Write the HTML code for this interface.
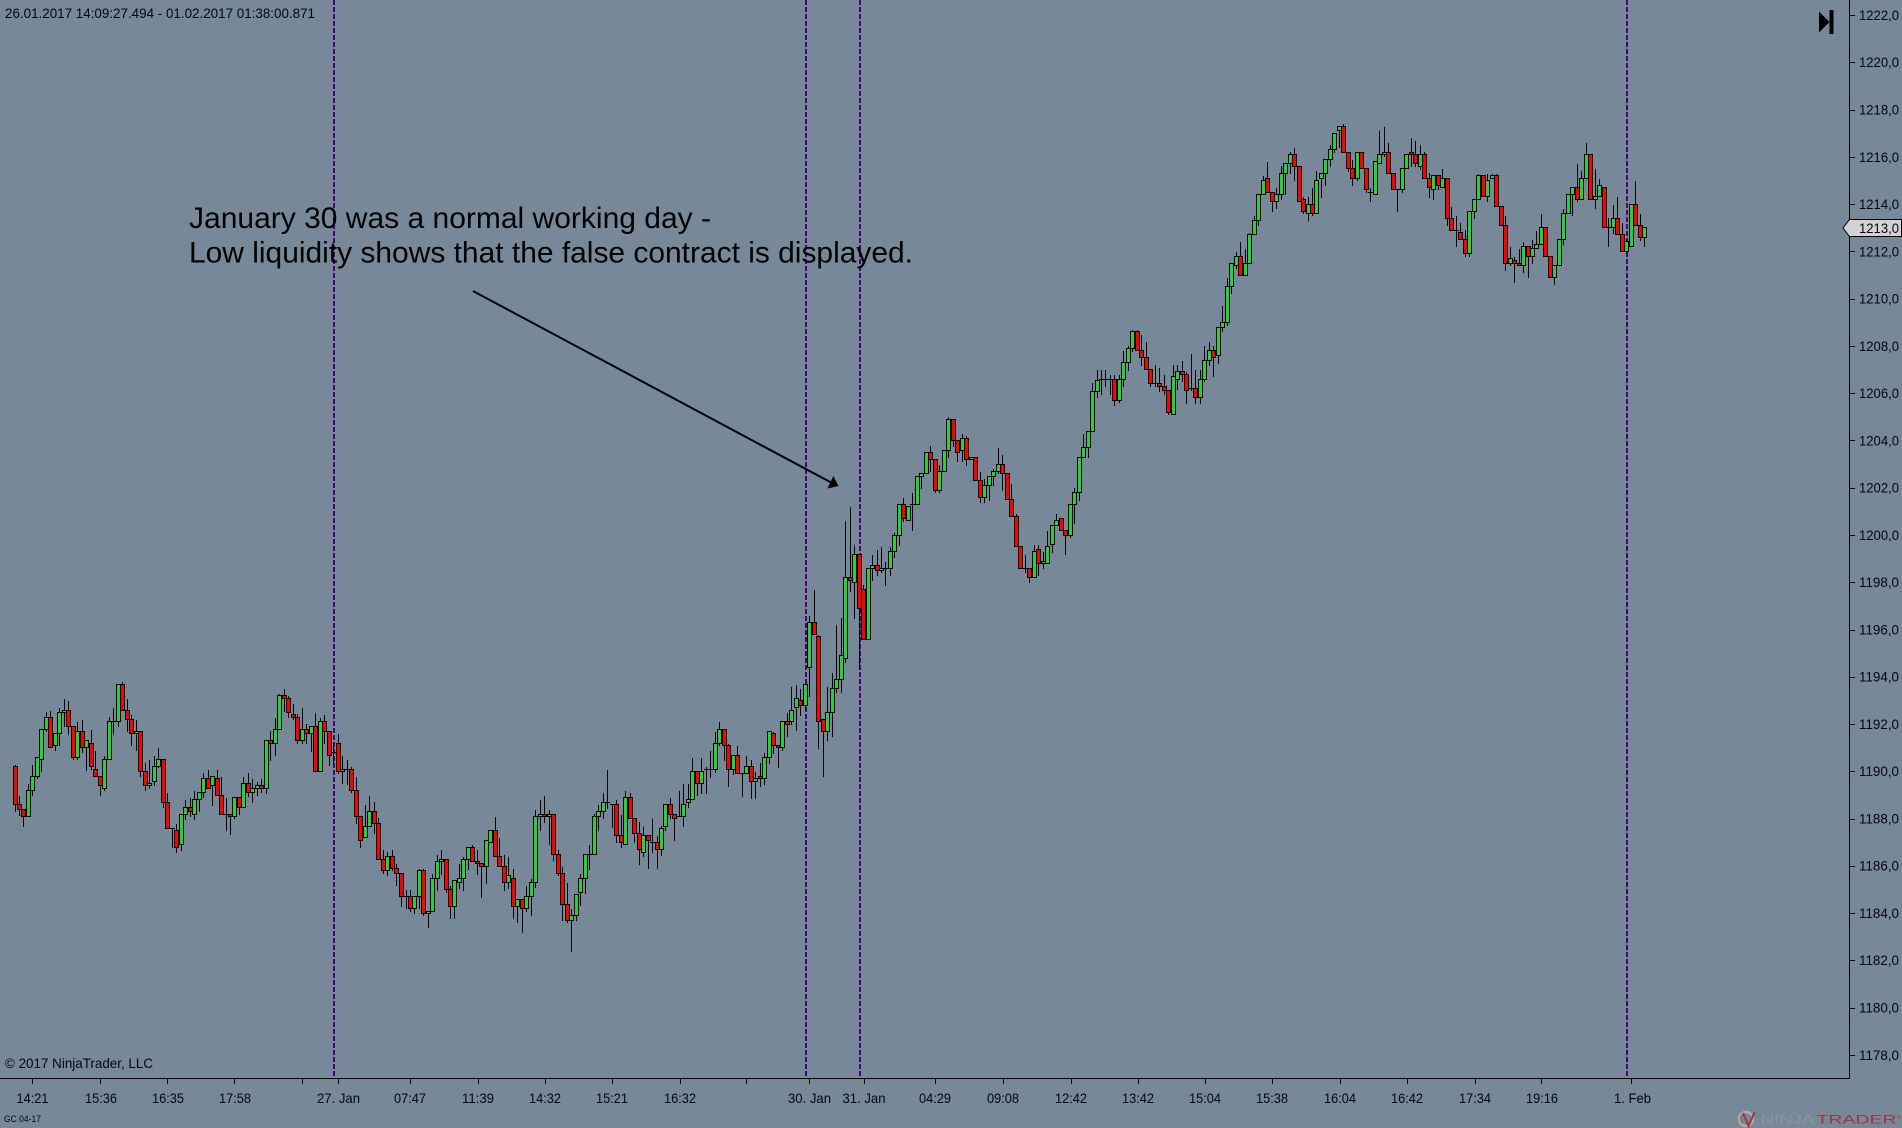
<!DOCTYPE html>
<html>
<head>
<meta charset="utf-8">
<title>Chart</title>
<style>
html,body{margin:0;padding:0;background:#778899;width:1902px;height:1128px;overflow:hidden}
svg{display:block;position:absolute;left:0;top:0}
text{font-family:"Liberation Sans",Arial,sans-serif;fill:#05050f}
</style>
</head>
<body>
<svg id="c" width="1902" height="1128" viewBox="0 0 1902 1128" xmlns="http://www.w3.org/2000/svg">
<rect width="1902" height="1128" fill="#778899"/>
<g stroke="#4b0082" stroke-width="2" stroke-dasharray="5 2" fill="none">
<path d="M334 0V1077"/><path d="M806 0V1077"/><path d="M860 0V1077"/><path d="M1627 0V1077"/>
</g>
<g id="candles"></g>
<path d="M0 1078.5H1849.5V0" fill="none" stroke="#000" stroke-width="1"/>
<path id="ticks" fill="none" stroke="#000" stroke-width="1" d=""/>

<text x="5" y="18" font-size="14" textLength="310" lengthAdjust="spacingAndGlyphs">26.01.2017 14:09:27.494 - 01.02.2017 01:38:00.871</text>
<text x="5" y="1068" font-size="14" textLength="148" lengthAdjust="spacingAndGlyphs">© 2017 NinjaTrader, LLC</text>
<text x="4" y="1122" font-size="9" textLength="37" lengthAdjust="spacingAndGlyphs">GC 04-17</text>

<text x="189" y="228" font-size="30" style="fill:#000" textLength="522" lengthAdjust="spacingAndGlyphs">January 30 was a normal working day -</text>
<text x="189" y="262.500" font-size="30" style="fill:#000" textLength="724" lengthAdjust="spacingAndGlyphs">Low liquidity shows that the false contract is displayed.</text>

<path d="M473 291L832 483" stroke="#000" stroke-width="2" fill="none"/>
<path d="M838.5 486L827.5 488.5L833.3 476Z" fill="#000"/>

<path d="M1819 11.5L1829.5 22L1819 32.5Z M1829.5 10H1833.5V34H1829.5Z" fill="#000"/>

<g font-size="14">
<text x="1859" y="20" textLength="40" lengthAdjust="spacingAndGlyphs">1222,0</text>
<text x="1859" y="67" textLength="40" lengthAdjust="spacingAndGlyphs">1220,0</text>
<text x="1859" y="114.500" textLength="40" lengthAdjust="spacingAndGlyphs">1218,0</text>
<text x="1859" y="162" textLength="40" lengthAdjust="spacingAndGlyphs">1216,0</text>
<text x="1859" y="209" textLength="40" lengthAdjust="spacingAndGlyphs">1214,0</text>
<text x="1859" y="256.500" textLength="40" lengthAdjust="spacingAndGlyphs">1212,0</text>
<text x="1859" y="303.500" textLength="40" lengthAdjust="spacingAndGlyphs">1210,0</text>
<text x="1859" y="351" textLength="40" lengthAdjust="spacingAndGlyphs">1208,0</text>
<text x="1859" y="398" textLength="40" lengthAdjust="spacingAndGlyphs">1206,0</text>
<text x="1859" y="445.500" textLength="40" lengthAdjust="spacingAndGlyphs">1204,0</text>
<text x="1859" y="492.500" textLength="40" lengthAdjust="spacingAndGlyphs">1202,0</text>
<text x="1859" y="540" textLength="40" lengthAdjust="spacingAndGlyphs">1200,0</text>
<text x="1859" y="587" textLength="40" lengthAdjust="spacingAndGlyphs">1198,0</text>
<text x="1859" y="634.500" textLength="40" lengthAdjust="spacingAndGlyphs">1196,0</text>
<text x="1859" y="681.500" textLength="40" lengthAdjust="spacingAndGlyphs">1194,0</text>
<text x="1859" y="729" textLength="40" lengthAdjust="spacingAndGlyphs">1192,0</text>
<text x="1859" y="776" textLength="40" lengthAdjust="spacingAndGlyphs">1190,0</text>
<text x="1859" y="823.500" textLength="40" lengthAdjust="spacingAndGlyphs">1188,0</text>
<text x="1859" y="870.500" textLength="40" lengthAdjust="spacingAndGlyphs">1186,0</text>
<text x="1859" y="918" textLength="40" lengthAdjust="spacingAndGlyphs">1184,0</text>
<text x="1859" y="965" textLength="40" lengthAdjust="spacingAndGlyphs">1182,0</text>
<text x="1859" y="1012.500" textLength="40" lengthAdjust="spacingAndGlyphs">1180,0</text>
<text x="1859" y="1060" textLength="40" lengthAdjust="spacingAndGlyphs">1178,0</text>
</g>

<path d="M1843 228L1849.5 219.5H1901.5V236.5H1849.500Z" fill="#d3d3d3" stroke="#000" stroke-width="1"/>
<text x="1859" y="233" font-size="14" textLength="40" lengthAdjust="spacingAndGlyphs">1213,0</text>

<g font-size="14">
<text x="16.500" y="1103" textLength="32" lengthAdjust="spacingAndGlyphs">14:21</text>
<text x="85" y="1103" textLength="32" lengthAdjust="spacingAndGlyphs">15:36</text>
<text x="152" y="1103" textLength="32" lengthAdjust="spacingAndGlyphs">16:35</text>
<text x="219" y="1103" textLength="32" lengthAdjust="spacingAndGlyphs">17:58</text>
<text x="317" y="1103" textLength="43" lengthAdjust="spacingAndGlyphs">27. Jan</text>
<text x="394" y="1103" textLength="32" lengthAdjust="spacingAndGlyphs">07:47</text>
<text x="462" y="1103" textLength="32" lengthAdjust="spacingAndGlyphs">11:39</text>
<text x="529" y="1103" textLength="32" lengthAdjust="spacingAndGlyphs">14:32</text>
<text x="596" y="1103" textLength="32" lengthAdjust="spacingAndGlyphs">15:21</text>
<text x="664" y="1103" textLength="32" lengthAdjust="spacingAndGlyphs">16:32</text>
<text x="788" y="1103" textLength="43" lengthAdjust="spacingAndGlyphs">30. Jan</text>
<text x="842.500" y="1103" textLength="43" lengthAdjust="spacingAndGlyphs">31. Jan</text>
<text x="919" y="1103" textLength="32" lengthAdjust="spacingAndGlyphs">04:29</text>
<text x="987" y="1103" textLength="32" lengthAdjust="spacingAndGlyphs">09:08</text>
<text x="1055" y="1103" textLength="32" lengthAdjust="spacingAndGlyphs">12:42</text>
<text x="1122" y="1103" textLength="32" lengthAdjust="spacingAndGlyphs">13:42</text>
<text x="1189" y="1103" textLength="32" lengthAdjust="spacingAndGlyphs">15:04</text>
<text x="1256" y="1103" textLength="32" lengthAdjust="spacingAndGlyphs">15:38</text>
<text x="1324" y="1103" textLength="32" lengthAdjust="spacingAndGlyphs">16:04</text>
<text x="1391" y="1103" textLength="32" lengthAdjust="spacingAndGlyphs">16:42</text>
<text x="1459" y="1103" textLength="32" lengthAdjust="spacingAndGlyphs">17:34</text>
<text x="1526" y="1103" textLength="32" lengthAdjust="spacingAndGlyphs">19:16</text>
<text x="1614" y="1103" textLength="37" lengthAdjust="spacingAndGlyphs">1. Feb</text>
</g>

<g fill="none">
<circle cx="1746" cy="1119" r="7" stroke="#b4aaa4" stroke-width="2.500"/>
<path d="M1743 1114.500A5 5 0 0 0 1743 1123" stroke="#7d6f68" stroke-width="1.500"/>
<path d="M1743 1113L1748.500 1126L1754.500 1112.500" stroke="#a5323e" stroke-width="2"/>
</g>
<text x="1760.500" y="1123.500" font-size="11.500" style="fill:#8d95a0" textLength="54" lengthAdjust="spacingAndGlyphs">NINJA</text>
<text x="1816.500" y="1123.500" font-size="11.500" style="fill:#a5323e" textLength="80" lengthAdjust="spacingAndGlyphs">TRADER</text>
<text x="1897" y="1119" font-size="5" style="fill:#a5323e">®</text>
</svg>
<script>
var S=[
[0,680,"r46,259,373,255,395 r58,373,388,348,405 r70,388,409,388,440 g85,332,409,312,409 g97,290,332,255,347 g112,232,290,232,296 g124,148,238,148,275 g139,112,148,98,155 r151,112,202,93,202 g166,160,196,160,212 g178,97,160,85,197 g193,91,97,57,140 r205,91,139,63,162 r220,139,232,139,238 g232,154,232,127,238 r247,154,202,120,218 g259,181,202,181,270 r274,190,259,151,268 r286,268,290,213,290 r301,290,317,290,347 g313,238,325,228,332 g328,124,238,113,238 d340,124,124,84,162 g355,13,124,13,140 r367,13,91,6,91 r382,91,118,57,155 r394,118,160,106,197 g409,154,160,120,212 r421,154,274,154,290 r436,274,317,250,332 g448,310,317,240,325 g463,259,304,228,315 g475,238,259,205,262 r490,238,367,238,383 r502,367,445,340,445 d517,445,445,445,503 r529,451,502,433,518 g544,403,493,403,510 g556,382,403,360,418 r571,382,394,355,410 g583,358,403,333,418 g598,337,358,337,395 g610,295,337,280,352 r625,295,325,270,325 g637,289,316,289,375 r652,295,346,270,346 r664,346,403,292,403 d679,403,403,354,452 r691,403,409,403,462 g703,352,409,352,416 r718,352,382,352,404 g730,310,382,292,382 r745,310,337,280,350 g757,325,337,297,368 g772,316,325,307,346 r784,316,325,297,338 g799,181,325,181,340 r811,181,190,155,240 g826,148,190,115,227 g838,46,148,43,148 r853,46,55,27,93 r865,55,97,48,112 r880,103,112,72,118 r892,112,181,103,190 g907,148,181,84,190 r919,148,160,134,190 g934,139,160,139,213 r946,139,274,99,274 g961,124,274,115,274 r973,124,154,106,190 r988,154,226,154,255 d1000,217,217,190,250 r1015,190,274,163,280 g1027,268,274,228,311 d1042,268,268,240,312 r1054,268,331,262,338 r1069,331,409,291,430 r1081,409,481,409,503 g1096,439,472,376,472 g1108,394,439,349,439 r1123,394,430,367,460 r1135,430,538,415,538 r1150,538,571,510,580 g1162,529,571,518,586 r1177,529,565,510,571 r1189,565,580,553,616"],
[400,680,"r3,580,649,580,680 d18,649,649,630,686 r31,649,685,630,695 g43,649,685,649,700 g58,571,649,568,685 r70,571,700,568,707 g85,694,700,694,743 g97,595,694,583,694 g112,544,595,526,630 g124,538,544,511,583 r139,538,628,538,638 r151,628,679,618,716 g163,601,679,601,716 g178,595,607,553,625 g190,538,595,532,630 g205,502,538,502,567 r217,502,544,495,544 r232,544,550,511,582 r244,550,559,550,651 g259,481,559,481,609 g271,451,487,451,487 r286,451,529,411,529 r298,529,559,475,559 r313,559,607,526,630 g325,586,607,532,625 r340,595,679,568,716 g352,658,679,658,728 r367,658,685,658,758 g379,649,685,618,695 g394,607,649,598,707 g406,409,607,391,623 g421,403,409,361,452 r433,403,409,349,426 g448,403,409,391,494 r460,403,523,403,540 r475,523,580,511,586 r487,580,673,562,722 r502,673,721,610,728 g514,706,721,687,815 g529,643,706,643,721 g541,595,637,583,675 g556,523,595,523,640 d568,523,523,495,568 g583,409,523,403,523 g595,394,409,376,452 g610,367,394,340,416 d622,367,367,270,384 d637,373,373,373,441 r649,373,466,361,487 r664,466,487,406,502 g676,352,493,334,493 r691,352,415,340,415 r703,415,460,415,488 r718,460,508,427,552 g730,466,517,442,529 r745,466,481,466,566 d757,487,487,418,517 r772,487,508,469,566 g784,445,508,439,525 g796,373,439,373,451 r811,373,403,355,415 r823,403,415,403,482 d838,409,409,334,409 g850,373,409,313,440 g865,358,367,313,383 g877,274,358,235,358 r892,274,310,274,347 g904,274,310,235,340 d919,268,268,262,340 d931,268,268,214,291 g946,190,268,157,276 g958,148,190,126,196 r973,148,196,148,240 r985,196,268,193,318 g1000,226,268,226,283 r1012,226,280,199,280 d1027,280,280,280,348 g1039,259,280,229,280 r1054,259,304,241,354 g1066,295,304,277,354 r1081,289,295,250,318 g1093,232,295,220,312 g1108,154,232,154,250 r1120,160,196,157,220 r1135,196,202,196,261 g1147,124,202,124,212 r1162,124,133,100,170 g1174,91,124,22,133 g1189,55,82,16,150"],
[780,400,"r61,901,916,868,945 g76,853,916,853,925 g88,667,802,648,888 r103,667,703,570,703 r115,709,964,706,1045 r130,958,994,958,1130 g142,937,994,862,1022 g157,865,937,820,1010 g169,838,865,675,876 g184,766,838,655,876 g196,532,775,363,788 r211,532,541,322,575 g223,463,547,435,655 r238,463,625,463,808 r250,568,718,555,718 g265,505,718,505,718 g277,496,505,466,542 r292,496,511,450,526 g304,505,511,442,517 d316,505,505,487,555 g331,454,505,442,527 g343,406,454,400,472 g358,313,406,313,435 r370,313,355,295,363 g385,319,361,319,361 d397,313,313,280,392 g412,229,313,229,313 g424,220,229,220,265 g439,157,220,157,220 r451,157,178,138,215 r466,178,271,178,278 g478,214,271,196,278 g493,151,214,151,214 g505,58,151,52,172 r520,58,121,58,138 r532,121,157,121,185 g547,115,151,102,183 r559,115,178,108,196 g574,172,178,172,178 r586,172,241,172,241 r601,241,292,217,308 g613,256,292,238,308 g628,229,256,229,300 g640,214,229,208,256 g655,193,214,145,220 r667,193,220,166,272 r682,220,298,220,298 r694,298,349,252,349 r709,349,439,343,439 r721,439,505,439,505 d736,505,505,466,518 r748,505,532,505,548 g763,454,532,436,532 r775,448,490,436,526 g790,484,490,457,505 g802,439,490,394,490 g817,376,433,376,456 g829,361,376,343,376 r844,355,391,355,391 r856,391,406,391,464 g871,313,406,313,412 g883,277,313,265,370 g898,172,277,172,300 g910,142,172,103,172 g925,94,142,94,173 g937,-27,94,-51,94 g952,-60,-27,-90,-9"],
[1100,220,"d4,478,478,450,522 d16,478,478,450,500 d31,478,478,465,522 r43,478,541,465,557 g58,478,541,465,548 g70,427,478,393,500 g85,385,427,378,450 g97,334,385,330,393 r112,334,391,330,391 r124,391,412,345,435 r139,412,448,366,448 r151,448,490,448,500 d166,490,490,435,500 r178,490,499,445,513 r193,499,511,465,522 r205,511,577,511,584 g220,469,583,435,583 g232,454,478,435,507 r247,454,463,423,485 r259,463,511,457,549 d274,505,505,403,511 r286,505,532,450,549 g301,478,532,450,549 g313,421,478,378,485 g328,391,421,366,435 r340,391,412,378,470 g355,322,406,322,429 g367,307,322,258,335 g382,199,307,175,315 g394,130,199,130,220 g409,109,136,96,144 r421,109,166,66,166 g436,130,166,87,166 g448,43,130,40,130"],
[1245,120,"g28,301,343,290,343 g40,223,301,223,316 g55,181,223,168,223 r67,176,217,127,217 r82,217,244,217,275 g94,223,244,205,265"],
[1280,110,"g4,190,253,170,269 g16,160,190,160,253 g31,133,160,127,190 r43,133,169,114,212 r58,169,274,169,274 r70,268,304,262,310 g85,283,310,262,332 r97,283,310,235,316 g109,211,310,184,310 g124,190,205,190,262 g136,148,190,148,226 g151,118,148,105,170 g163,70,118,70,127 g178,49,61,49,112 r190,49,127,43,127 r205,127,175,127,184 r217,175,205,151,226 g232,127,205,127,212 r244,127,175,127,175 r259,175,238,175,248 d271,247,247,235,275 g286,154,253,154,253 g298,133,160,64,160 g313,127,133,52,140 r325,127,190,100,190 r340,190,238,190,238 d352,238,238,238,305 g367,175,238,175,248 g379,133,175,133,175 r394,127,133,85,170 r406,133,160,94,170 g421,133,169,106,178 r433,133,205,127,205 r448,205,232,190,262 g460,196,238,196,269 r475,196,226,196,238 g487,205,232,178,232 r502,205,325,205,347 r514,325,361,292,361 d529,361,361,319,410 r541,367,388,340,388 r556,388,430,361,440 g568,304,430,304,440 g583,268,304,268,325 g595,196,268,193,268 r610,196,259,196,259 g622,211,259,193,275 g637,196,205,193,205 r649,196,289,193,289 r664,289,346,289,346 r676,346,460,319,482 g691,445,460,412,466 r703,451,460,442,517 r718,460,466,418,466 g730,409,466,397,488 r745,409,439,409,502 g757,415,439,391,461 g769,403,415,364,415 g784,352,403,313,403 r796,352,439,352,439 r811,439,502,439,502 g823,466,502,466,523 g838,388,466,388,466 g850,310,388,298,403 g865,253,310,253,310 g877,232,253,232,316 r892,232,268,163,274 g904,205,268,184,268 g919,133,205,100,205 r931,133,268,133,268 g946,259,268,178,296 g958,226,259,208,259 r973,232,352,232,352 d985,352,352,325,410 g1000,325,352,286,370 r1012,325,373,262,373 r1027,373,424,340,424 g1039,394,424,388,429 g1054,283,409,283,409 r1066,283,346,213,346 r1081,346,382,313,390 g1093,352,382,352,410"]
];
var h='';
S.forEach(function(s){
  s[2].split(' ').forEach(function(t){
    var k=t[0],a=t.slice(1).split(',').map(Number);
    var px=Math.floor(s[0]+a[0]/3);
    var Y=function(v){return Math.floor(s[1]+v/3)+.5;};
    var T=Y(a[1]),B=Y(a[2]),H=Y(a[3]),L=Y(a[4]);
    h+='<path d="M'+(px+.5)+' '+(H-.5)+'V'+(L+.5)+'" stroke="#000" stroke-width="1" fill="none"/>';
    if(k=='d'){
      h+='<path d="M'+(px-2)+' '+T+'H'+(px+3)+'" stroke="#000" stroke-width="1" fill="none"/>';
    }else{
      h+='<rect x="'+(px-1.5)+'" y="'+T+'" width="4" height="'+Math.max(B-T,1)+'" fill="'+(k=='g'?'#26d237':'#ff0000')+'" stroke="#000" stroke-width="1"/>';
    }
  });
});
document.getElementById('candles').innerHTML=h;
var d='';
for(var i=0;i<23;i++){var y=Math.round(15+i*47.27)+.5;d+='M1850 '+y+'H1855';}
[32,100,167,234,302,338,410,478,545,612,680,746,809,864,935,1003,1071,1138,1205,1272,1340,1407,1475,1541,1631].forEach(function(x){d+='M'+(x+.5)+' 1079V1084';});
document.getElementById('ticks').setAttribute('d',d);
</script>
</body>
</html>
